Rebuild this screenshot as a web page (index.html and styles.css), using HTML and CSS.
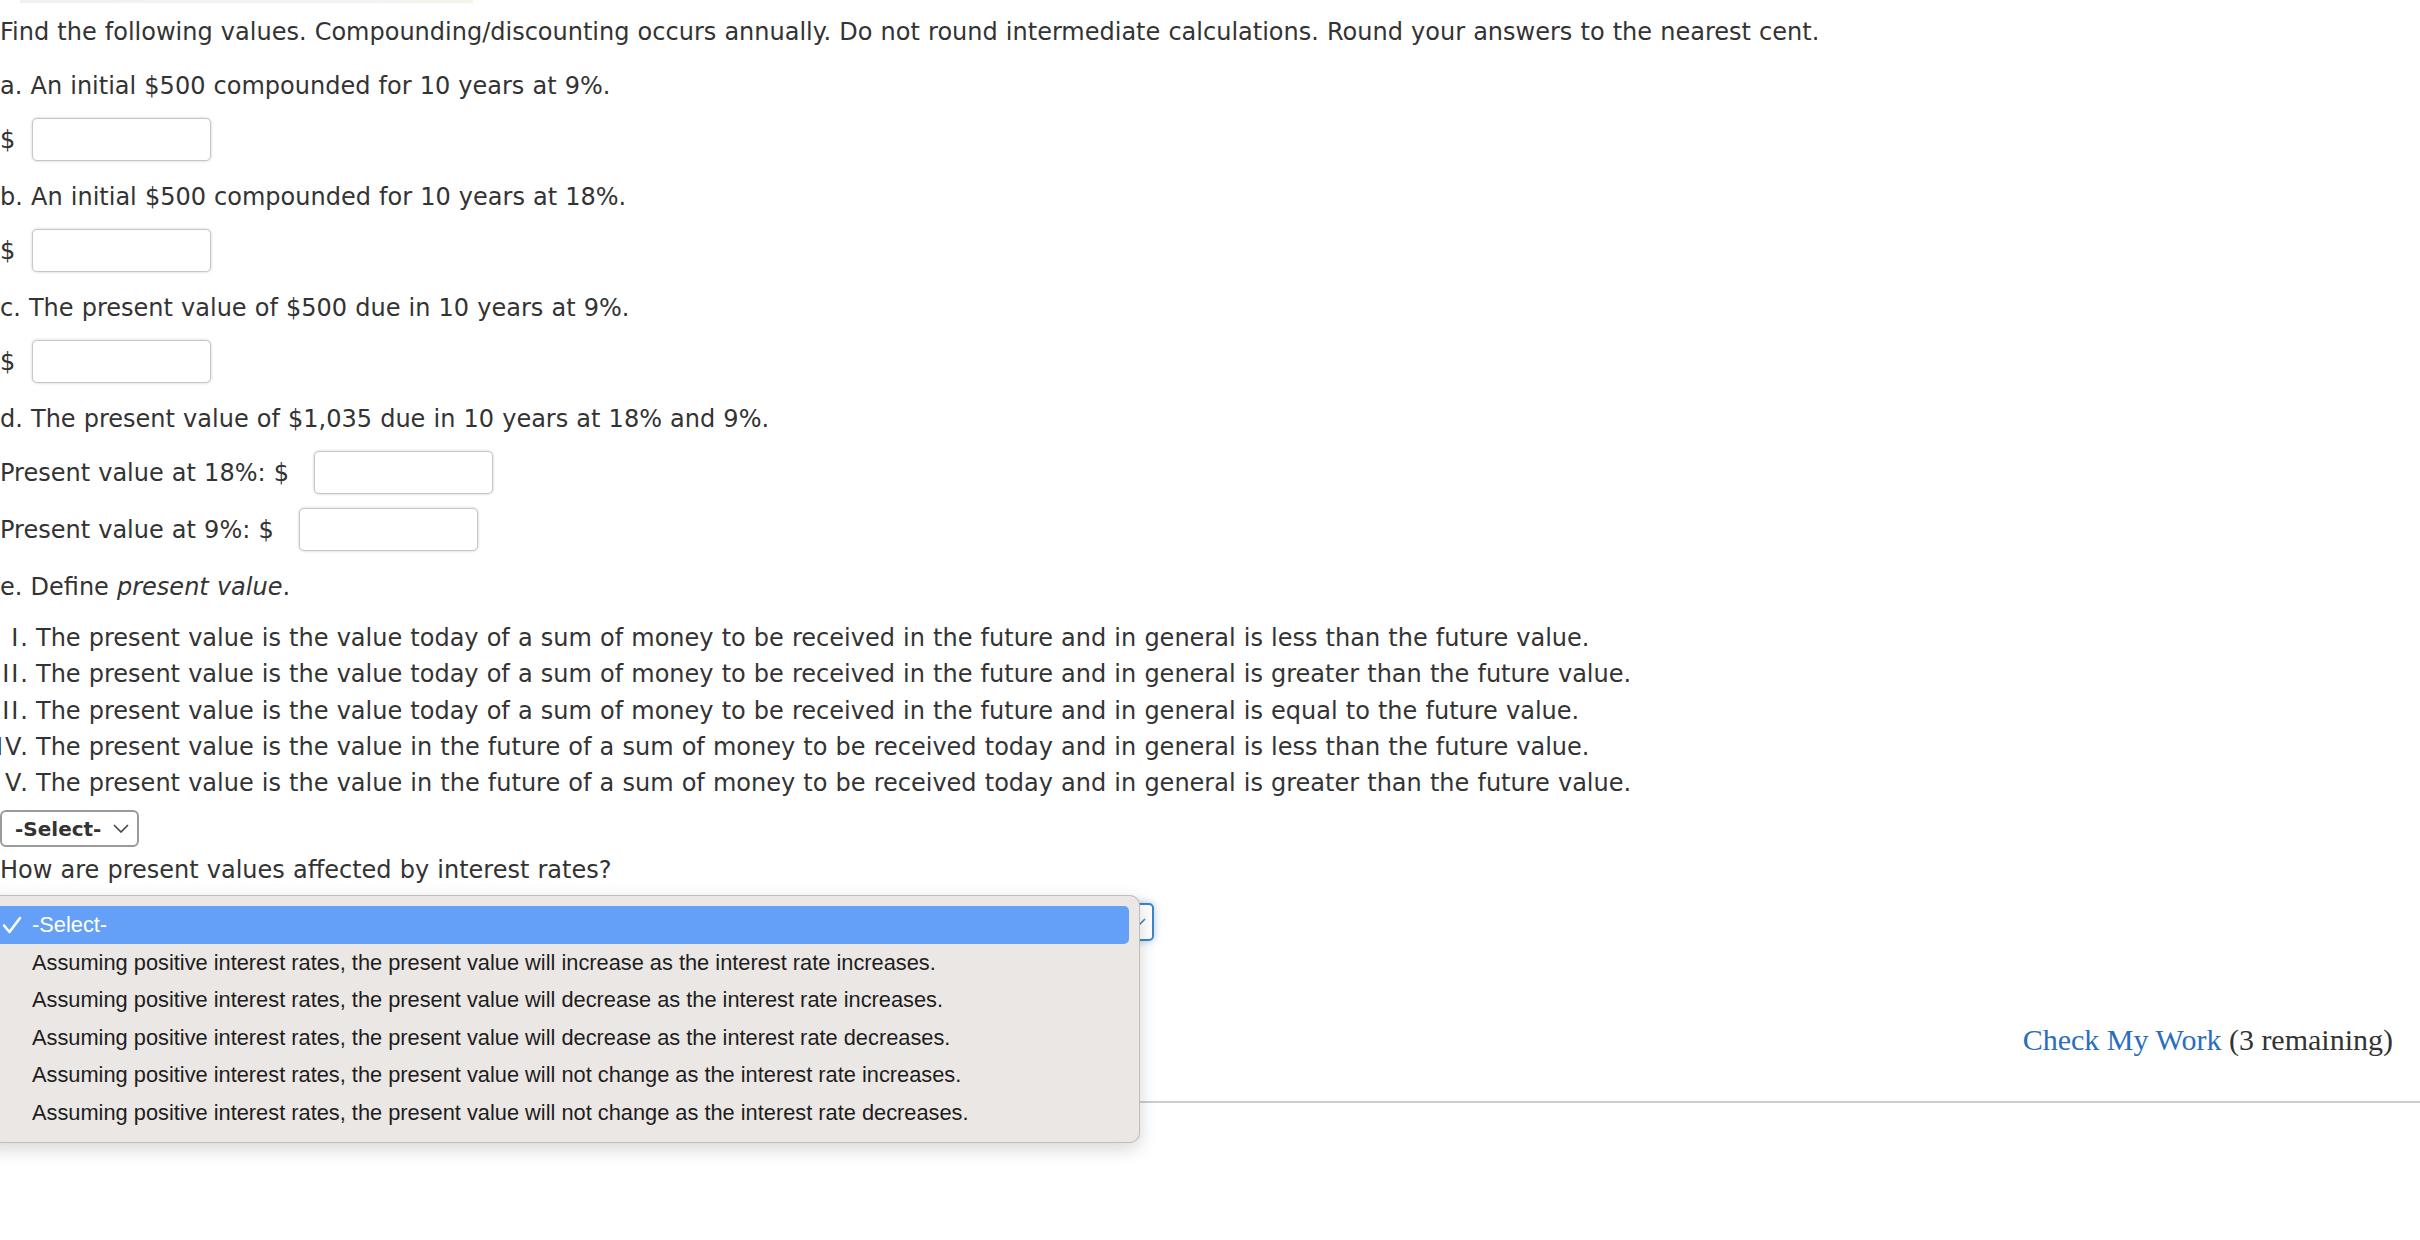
FILE: index.html
```html
<!DOCTYPE html>
<html>
<head>
<meta charset="utf-8">
<title>Present value</title>
<link rel="stylesheet" href="styles.css">
</head>
<body>
<div class="page">
  <div class="topstrip"></div>
  <p class="intro">Find the following values. Compounding/discounting occurs annually. Do not round intermediate calculations. Round your answers to the nearest cent.</p>

  <p class="q">a. An initial $500 compounded for 10 years at 9%.</p>
  <div class="ans"><span class="cur">$</span><span class="box"></span></div>

  <p class="q">b. An initial $500 compounded for 10 years at 18%.</p>
  <div class="ans"><span class="cur">$</span><span class="box"></span></div>

  <p class="q">c. The present value of $500 due in 10 years at 9%.</p>
  <div class="ans"><span class="cur">$</span><span class="box"></span></div>

  <p class="q">d. The present value of $1,035 due in 10 years at 18% and 9%.</p>
  <div class="ans"><span class="lbl">Present value at 18%: $</span><span class="box box-pv"></span></div>
  <div class="ans"><span class="lbl">Present value at 9%: $</span><span class="box box-pv"></span></div>

  <p class="q">e. Define <i>present value</i>.</p>
  <ol class="defs">
    <li>The present value is the value today of a sum of money to be received in the future and in general is less than the future value.</li>
    <li>The present value is the value today of a sum of money to be received in the future and in general is greater than the future value.</li>
    <li>The present value is the value today of a sum of money to be received in the future and in general is equal to the future value.</li>
    <li>The present value is the value in the future of a sum of money to be received today and in general is less than the future value.</li>
    <li>The present value is the value in the future of a sum of money to be received today and in general is greater than the future value.</li>
  </ol>

  <div class="select-small">
    <span>-Select-</span>
    <svg class="chev" width="16" height="9" viewBox="0 0 16 9"><path d="M1 1 L8 8 L15 1" fill="none" stroke="#444" stroke-width="1.6"/></svg>
  </div>

  <p class="prompt">How are present values affected by interest rates?</p>

  <div class="combo">
    <div class="select-wide">
      <svg class="chev" width="16" height="9" viewBox="0 0 16 9"><path d="M1 1 L8 8 L15 1" fill="none" stroke="#3d85c6" stroke-width="1.6"/></svg>
    </div>
    <div class="menu">
      <div class="opt sel"><svg class="check" width="20" height="18" viewBox="0 0 20 18"><path d="M2 9.5 L7.5 16 L18 2" fill="none" stroke="#fff" stroke-width="2.6" stroke-linecap="round" stroke-linejoin="round"/></svg>-Select-</div>
      <div class="opt">Assuming positive interest rates, the present value will increase as the interest rate increases.</div>
      <div class="opt">Assuming positive interest rates, the present value will decrease as the interest rate increases.</div>
      <div class="opt">Assuming positive interest rates, the present value will decrease as the interest rate decreases.</div>
      <div class="opt">Assuming positive interest rates, the present value will not change as the interest rate increases.</div>
      <div class="opt">Assuming positive interest rates, the present value will not change as the interest rate decreases.</div>
    </div>
  </div>

  <div class="footer"><a class="check-link" href="#">Check My Work</a> (3 remaining)</div>
  <div class="rule"></div>
</div>
</body>
</html>
```

FILE: styles.css
```css
html, body {
  margin: 0;
  padding: 0;
  background: #fff;
}
body {
  font-family: "DejaVu Sans", Verdana, sans-serif;
  font-size: 24px;
  word-spacing: 0.5px;
  color: #333;
}
.page {
  position: relative;
  width: 2420px;
  height: 1240px;
  overflow: hidden;
}
.topstrip {
  height: 3px;
  width: 453px;
  margin-left: 20px;
  background: linear-gradient(to right, #eef2f3, #f2f4f1 80%, #f6f3e6);
}
p {
  margin: 0;
  line-height: 36px;
  white-space: nowrap;
}
.intro {
  margin-top: 11px;
}
.q {
  margin-top: 18px;
}
.ans {
  display: flex;
  align-items: center;
  height: 43px;
  margin-top: 14px;
}
.cur {
  width: 32px;
}
.box {
  display: block;
  width: 179px;
  height: 43px;
  box-sizing: border-box;
  border: 1px solid #c6c6c6;
  border-radius: 5px;
  box-shadow: 0 0 3px rgba(0, 0, 0, 0.2);
  background: #fff;
}
.lbl {
  white-space: nowrap;
}
.box-pv {
  margin-left: 25px;
}
.defs {
  list-style: none;
  counter-reset: r;
  margin: 15px 0 0;
  padding: 0 0 0 36px;
  line-height: 36.25px;
}
.defs li {
  counter-increment: r;
  position: relative;
  white-space: nowrap;
}
.defs li::before {
  content: counter(r, upper-roman) ".";
  letter-spacing: 2px;
  position: absolute;
  right: calc(100% + 6px);
  top: 0;
}
.select-small {
  margin-top: 9px;
  width: 139px;
  height: 37px;
  box-sizing: border-box;
  border: 2px solid #9a9a9a;
  border-radius: 6px;
  display: flex;
  align-items: center;
  padding-left: 13px;
  font-weight: bold;
  font-size: 20px;
  word-spacing: 0;
  color: #333;
  background: #fff;
}
.select-small .chev {
  margin-left: auto;
  margin-right: 8px;
}
.prompt {
  margin-top: 5px;
}
.combo {
  position: relative;
  margin-top: 15px;
  width: 1154px;
  height: 38px;
}
.select-wide {
  width: 1154px;
  height: 38px;
  box-sizing: border-box;
  border: 2px solid #3d85c6;
  border-radius: 5px;
  box-shadow: 0 0 8px rgba(61, 133, 198, 0.45);
  background: #fff;
  display: flex;
  align-items: center;
  justify-content: flex-end;
  padding-right: 6px;
}
.menu {
  position: absolute;
  top: -8px;
  left: -20px;
  width: 1160px;
  height: 248px;
  box-sizing: border-box;
  padding: 10px 10px 11px;
  background: #ebe7e4;
  border: 1px solid rgba(0, 0, 0, 0.18);
  border-radius: 10px;
  box-shadow: 0 6px 18px rgba(0, 0, 0, 0.16);
  z-index: 2;
  font-family: "Liberation Sans", Arial, sans-serif;
  font-size: 21.8px;
  word-spacing: 0;
  color: #1d1d1d;
}
.opt {
  position: relative;
  height: 37.5px;
  line-height: 37.5px;
  padding-left: 41px;
  white-space: nowrap;
}
.opt.sel {
  background: #64a0f7;
  color: #fff;
  border-radius: 5px;
}
.check {
  position: absolute;
  left: 11px;
  top: 10px;
}
.footer {
  margin-top: 79px;
  line-height: 40px;
  text-align: right;
  padding-right: 27px;
  font-family: "Liberation Serif", Georgia, serif;
  font-size: 30px;
  word-spacing: 0;
  color: #333;
}
.check-link {
  color: #2a6ebb;
  text-decoration: none;
}
.rule {
  margin-top: 41px;
  height: 2px;
  background: #cdcdcd;
}
```
